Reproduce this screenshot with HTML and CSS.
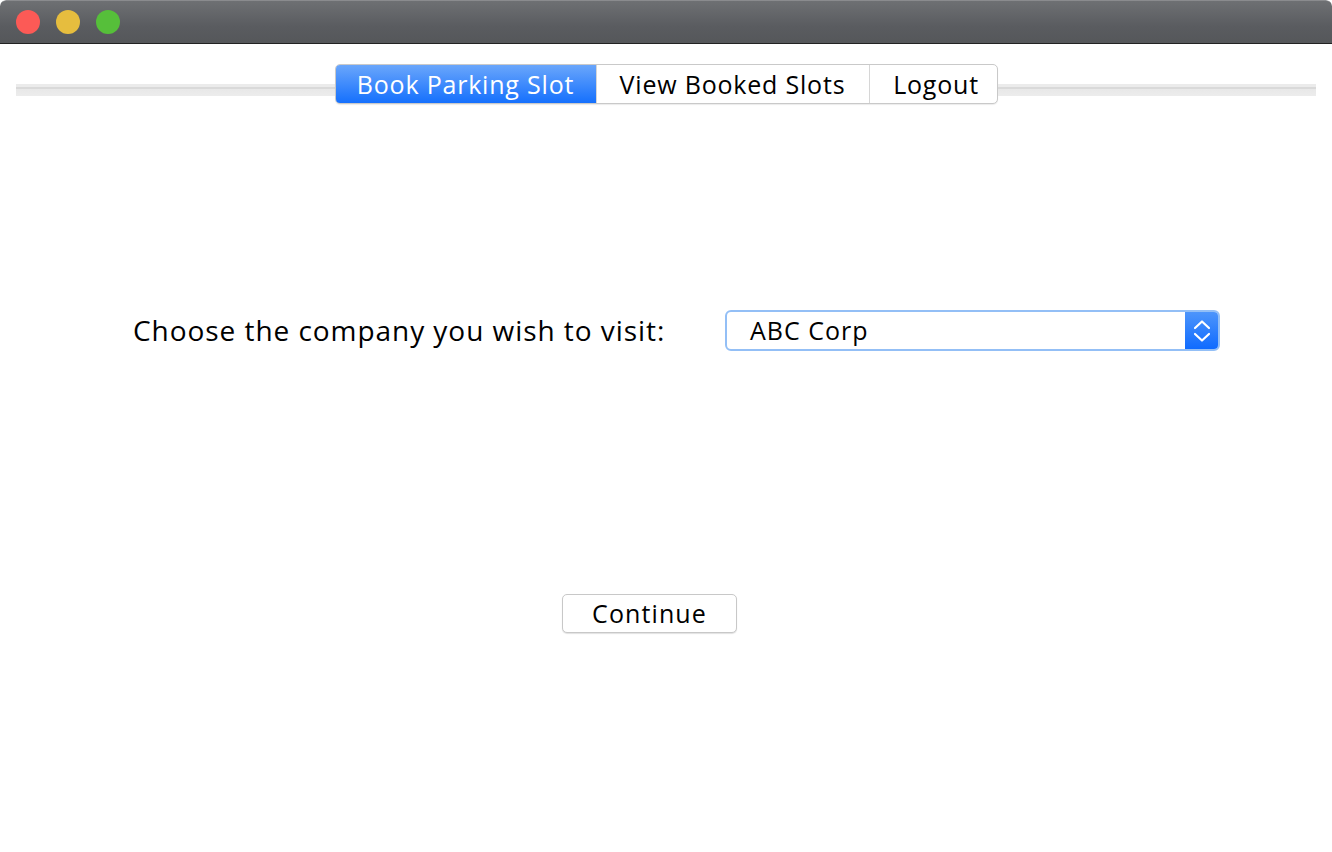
FILE: index.html
```html
<!DOCTYPE html>
<html>
<head>
<meta charset="utf-8">
<title>Parking</title>
<link rel="stylesheet" href="styles.css">
</head>
<body>
<div class="window">
  <div class="titlebar">
    <span class="light red"></span>
    <span class="light yellow"></span>
    <span class="light green"></span>
  </div>
  <div class="tabrow">
    <div class="rail"></div>
    <div class="tabs">
      <div class="tab active">Book Parking Slot</div>
      <div class="tab">View Booked Slots</div>
      <div class="tab">Logout</div>
    </div>
    <div class="rail"></div>
  </div>
  <div class="content">
    <div class="form-row">
      <div class="label">Choose the company you wish to visit:</div>
      <div class="combo">
        <span class="combo-text">ABC Corp</span>
        <span class="combo-arrow">
          <svg width="18" height="26" viewBox="0 0 18 26"><path d="M2 10 L9 3.5 L16 10" fill="none" stroke="#fff" stroke-width="2.2" stroke-linecap="round" stroke-linejoin="round"/><path d="M2 16 L9 22.5 L16 16" fill="none" stroke="#fff" stroke-width="2.2" stroke-linecap="round" stroke-linejoin="round"/></svg>
        </span>
      </div>
    </div>
    <div class="actions">
      <div class="button">Continue</div>
    </div>
  </div>
</div>
</body>
</html>
```
FILE: styles.css
```css
html, body {
  margin: 0;
  padding: 0;
  background: #ffffff;
}
body {
  font-family: "Open Sans", "Lato", sans-serif;
  color: #000;
}
.window {
  width: 1332px;
  height: 852px;
  background: #fff;
  border-radius: 6px 6px 0 0;
  overflow: hidden;
  display: flex;
  flex-direction: column;
}
.titlebar {
  flex: none;
  background: linear-gradient(#6e7073, #5a5c60 60%, #55575a);
  border-top: 1px solid #8a8b8e;
  box-sizing: border-box;
  border-bottom: 1px solid #222;
  height: 44px;
  display: flex;
  align-items: center;
  padding-left: 16px;
  gap: 16px;
  border-radius: 6px 6px 0 0;
}
.light {
  width: 24px;
  height: 24px;
  border-radius: 50%;
  display: block;
}
.red { background: #fc5a56; }
.yellow { background: #e6bd3e; }
.green { background: #56bf3a; }
.tabrow {
  display: flex;
  align-items: flex-start;
  margin: 20px 16px 0 16px;
  height: 40px;
}
.rail {
  flex: 1;
  height: 12px;
  margin-top: 20px;
  background: linear-gradient(#ebebeb 0, #ebebeb 3px, #d9d9d9 3px, #d9d9d9 5px, #e8e8e8 5px, #ececec 100%);
}
.tabs {
  display: flex;
  height: 40px;
  border: 1px solid #c9c9c9;
  border-radius: 5px;
  box-sizing: border-box;
  background: #fff;
  box-shadow: 0 1px 1px rgba(0,0,0,0.08);
  overflow: hidden;
}
.tab {
  font-size: 25px;
  letter-spacing: 0.8px;
  line-height: 38px;
  border-left: 1px solid #d6d6d6;
  white-space: nowrap;
  text-align: center;
}
.tab:first-child { border-left: none; }
.tab.active {
  color: #fff;
  background: linear-gradient(#6aa6fb, #1570fd);
  width: 260px;
}
.tab:nth-child(2) { width: 272px; }
.tab:nth-child(3) { width: 128px; padding-left: 6px; box-sizing: border-box; }
.content {
  flex: 1;
  display: flex;
  flex-direction: column;
}
.form-row {
  display: flex;
  align-items: center;
  padding: 206px 0 0 133px;
}
.label {
  width: 592px;
  font-size: 28px;
  letter-spacing: 0.95px;
  line-height: 41px;
}
.combo {
  width: 495px;
  height: 41px;
  box-sizing: border-box;
  border: 2px solid #93bff6;
  border-radius: 6px;
  display: flex;
  overflow: hidden;
  background: #fff;
}
.combo-text {
  flex: 1;
  font-size: 25px;
  letter-spacing: 1px;
  line-height: 37px;
  padding-left: 23px;
}
.combo-arrow {
  width: 33px;
  background: linear-gradient(#4d95fb, #0f6bff);
  display: flex;
  align-items: center;
  justify-content: center;
}
.actions {
  display: flex;
  padding: 243px 0 0 562px;
}
.button {
  width: 175px;
  height: 39px;
  box-sizing: border-box;
  border: 1px solid #c8c8c8;
  border-radius: 5px;
  box-shadow: 0 1px 1px rgba(0,0,0,0.12);
  font-size: 25px;
  letter-spacing: 1.1px;
  line-height: 37px;
  text-align: center;
  background: #fff;
}
```
